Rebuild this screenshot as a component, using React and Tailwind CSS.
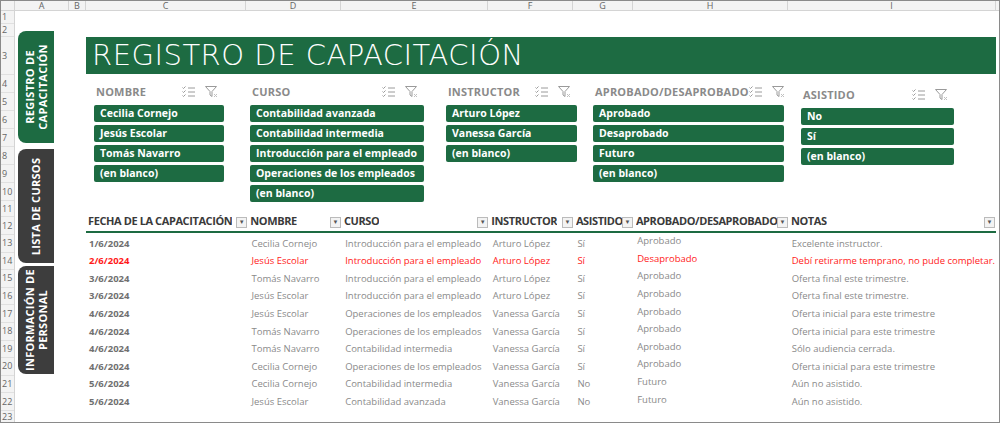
import React from "react";

const G = "bg-[#1d6b42]";
const rowsH = [13, 13, 38, 18, 18, 18, 18, 18, 18, 18, 16, 18, 17.6, 17.6, 17.6, 17.6, 17.6, 17.6, 17.6, 17.6, 17.6, 17.6, 14];

const cols = [
  ["A", 54], ["B", 17], ["C", 160], ["D", 95], ["E", 147], ["F", 85], ["G", 60], ["H", 155], ["I", 208],
];

const data = [
  ["1/6/2024", "Cecilia Cornejo", "Introducción para el empleado", "Arturo López", "Sí", "Aprobado", "Excelente instructor."],
  ["2/6/2024", "Jesús Escolar", "Introducción para el empleado", "Arturo López", "Sí", "Desaprobado", "Debí retirarme temprano, no pude completar."],
  ["3/6/2024", "Tomás Navarro", "Introducción para el empleado", "Arturo López", "Sí", "Aprobado", "Oferta final este trimestre."],
  ["3/6/2024", "Jesús Escolar", "Introducción para el empleado", "Arturo López", "Sí", "Aprobado", "Oferta final este trimestre."],
  ["4/6/2024", "Jesús Escolar", "Operaciones de los empleados", "Vanessa García", "Sí", "Aprobado", "Oferta inicial para este trimestre"],
  ["4/6/2024", "Tomás Navarro", "Operaciones de los empleados", "Vanessa García", "Sí", "Aprobado", "Oferta inicial para este trimestre"],
  ["4/6/2024", "Tomás Navarro", "Contabilidad intermedia", "Vanessa García", "Sí", "Aprobado", "Sólo audiencia cerrada."],
  ["4/6/2024", "Cecilia Cornejo", "Operaciones de los empleados", "Vanessa García", "Sí", "Aprobado", "Oferta inicial para este trimestre"],
  ["5/6/2024", "Cecilia Cornejo", "Contabilidad intermedia", "Vanessa García", "No", "Futuro", "Aún no asistido."],
  ["5/6/2024", "Jesús Escolar", "Contabilidad avanzada", "Vanessa García", "No", "Futuro", "Aún no asistido."],
];

function Icons() {
  return (
    <div className="flex items-center gap-[10px] text-[#9a9a9a]">
      <svg width="13" height="12" viewBox="0 0 13 12" fill="none" stroke="currentColor" strokeWidth="1">
        <path d="M0.5 1.5l1 1 2-2M0.5 5.5l1 1 2-2M0.5 9.5l1 1 2-2M6 2h7M6 6h7M6 10h7" />
      </svg>
      <svg width="13" height="12" viewBox="0 0 13 12" fill="none" stroke="currentColor" strokeWidth="1">
        <path d="M0.5 0.5h11l-4.5 5v5l-2-1.5v-3.5z" />
        <path d="M9 8l3 3M12 8l-3 3" stroke="#c0c0c0" />
      </svg>
    </div>
  );
}

function Slicer({ title, items, w, top = 0 }) {
  return (
    <div style={{ width: w }} className="flex flex-col">
      <div className="flex items-center justify-between h-[20px] pl-[2px] pr-[6px]" style={{ marginTop: top }}>
        <span className="text-[11px] font-bold text-[#8a8a8a] tracking-[0.2px]">{title}</span>
        <Icons />
      </div>
      <div className="flex flex-col gap-[3px] mt-[3px]">
        {items.map((t) => (
          <div key={t} className={`${G} h-[17px] rounded-[2px] text-white text-[10.5px] font-bold pl-[6px] flex items-center`}>{t}</div>
        ))}
      </div>
    </div>
  );
}

function Tab({ label, h, green, mt }) {
  return (
    <div style={{ height: h, marginTop: mt }} className={`w-[36px] ${green ? G : "bg-[#3d3d3d]"} rounded-l-[8px] flex items-center justify-center`}>
      <div className="-rotate-90 whitespace-nowrap text-center text-white text-[11px] font-bold tracking-wide leading-[13px]">{label}</div>
    </div>
  );
}

function Th({ w, label }) {
  return (
    <div style={{ width: w }} className="flex items-end justify-between pr-[1px] pl-[2px]">
      <span className="text-[11px] tracking-[-0.4px] font-bold text-[#3a3a3a] whitespace-nowrap overflow-hidden">{label}</span>
      <span className="w-[11px] h-[11px] border border-[#bbb] bg-[#f3f3f3] text-[6px] text-[#555] flex items-center justify-center mb-[1px] shrink-0">▼</span>
    </div>
  );
}

export default function App() {
  const tw = [163, 94, 148, 85, 60, 155, 208];
  return (
    <div className="w-[1000px] h-[423px] bg-white border border-[#8a8a8a] overflow-hidden" style={{ fontFamily: '"Open Sans","Liberation Sans",sans-serif' }}>
      <div className="flex h-[10px] bg-[#f3f3f3] border-b border-[#d4d4d4]">
        <div className="w-[14px] border-r border-[#d4d4d4]" />
        {cols.map(([c, w]) => (
          <div key={c} style={{ width: w }} className="border-r border-[#d4d4d4] text-[9px] leading-[10px] text-[#666] text-center">{c}</div>
        ))}
      </div>
      <div className="flex">
        <div className="w-[14px] bg-[#f3f3f3] border-r border-[#d4d4d4] shrink-0">
          {rowsH.map((h, i) => (
            <div key={i} style={{ height: h }} className="border-b border-[#e0e0e0] text-[9px] text-[#666] flex items-center pl-[1px] leading-[10px]">{i + 1}</div>
          ))}
        </div>
        <div className="w-[54px] pl-[3px] pt-[20px] flex flex-col shrink-0">
          <Tab label={<>REGISTRO DE<br />CAPACITACIÓN</>} h={112} green />
          <Tab label="LISTA DE CURSOS" h={114} mt={6} />
          <Tab label={<>INFORMACIÓN DE<br />PERSONAL</>} h={108} mt={3} />
        </div>
        <div className="w-[17px] shrink-0" />
        <div className="flex flex-col w-[910px]">
          <div className={`${G} h-[37px] mt-[26px] flex items-center pl-[6px]`}>
            <span className="text-white text-[29px] tracking-[0.5px]" style={{ fontFamily: '"DejaVu Sans","Liberation Sans",sans-serif', fontWeight: 200 }}>REGISTRO DE CAPACITACIÓN</span>
          </div>
          <div className="flex mt-[8px] h-[117px]">
            <div className="ml-[8px]"><Slicer w={130} title="NOMBRE" items={["Cecilia Cornejo", "Jesús Escolar", "Tomás Navarro", "(en blanco)"]} /></div>
            <div className="ml-[26px]"><Slicer w={174} title="CURSO" items={["Contabilidad avanzada", "Contabilidad intermedia", "Introducción para el empleado", "Operaciones de los empleados", "(en blanco)"]} /></div>
            <div className="ml-[22px]"><Slicer w={131} title="INSTRUCTOR" items={["Arturo López", "Vanessa García", "(en blanco)"]} /></div>
            <div className="ml-[16px]"><Slicer w={191} title="APROBADO/DESAPROBADO" items={["Aprobado", "Desaprobado", "Futuro", "(en blanco)"]} /></div>
            <div className="ml-[17px]"><Slicer w={153} title="ASISTIDO" items={["No", "Sí", "(en blanco)"]} top={3} /></div>
          </div>
          <div className="flex h-[21px] mt-[13px] border-b-2 border-[#1d6b42] pb-[2px]">
            {["FECHA DE LA CAPACITACIÓN", "NOMBRE", "CURSO", "INSTRUCTOR", "ASISTIDO", "APROBADO/DESAPROBADO", "NOTAS"].map((l, i) => (
              <Th key={l} w={tw[i]} label={l} />
            ))}
          </div>
          <div className="pt-[2px]">
            {data.map((r, ri) => {
              const red = ri === 1;
              return (
                <div key={ri} className="flex h-[17.6px] items-center text-[9.5px]">
                  {r.map((c, i) => (
                    <div key={i} style={{ width: tw[i] }} className={`pl-[3px] whitespace-nowrap ${i === 0 ? "font-bold" : ""} ${i === 5 ? "-mt-[5px]" : ""} ${red ? "text-[#ff1a1a]" : i === 0 ? "text-[#707070]" : "text-[#8a8a8a]"}`}>{c}</div>
                  ))}
                </div>
              );
            })}
          </div>
        </div>
      </div>
    </div>
  );
}
